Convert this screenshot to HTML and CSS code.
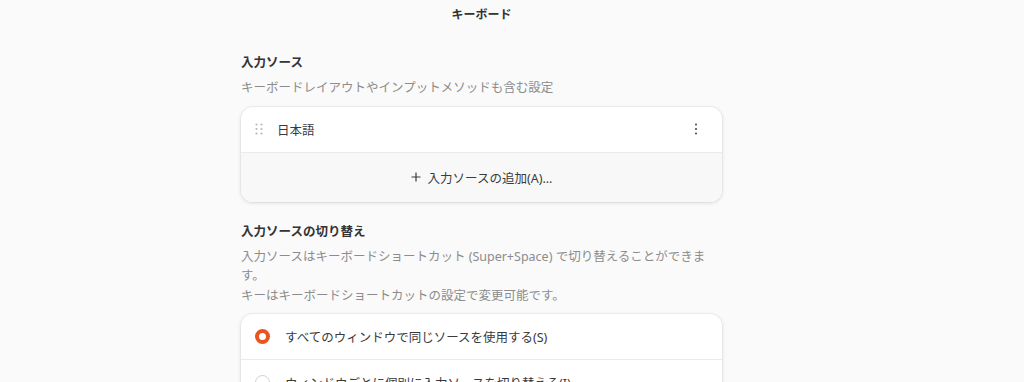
FILE: index.html
```html
<!DOCTYPE html>
<html lang="ja">
<head>
    <meta charset="UTF-8">
    <meta name="viewport" content="width=device-width, initial-scale=1.0">
    <title>キーボード</title>
    <link rel="stylesheet" href="styles.css">
</head>
<body>
    <div class="page">
        <header class="headerbar">
            <h1 class="title">キーボード</h1>
        </header>

        <main class="content">
            <section class="group">
                <h2 class="group-title">入力ソース</h2>
                <p class="group-desc">キーボードレイアウトやインプットメソッドも含む設定</p>
                <div class="card">
                    <div class="row">
                        <svg class="drag-handle" width="8" height="12" viewBox="0 0 8 12">
                            <circle cx="1.5" cy="1.5" r="1.1"/>
                            <circle cx="6.5" cy="1.5" r="1.1"/>
                            <circle cx="1.5" cy="6" r="1.1"/>
                            <circle cx="6.5" cy="6" r="1.1"/>
                            <circle cx="1.5" cy="10.5" r="1.1"/>
                            <circle cx="6.5" cy="10.5" r="1.1"/>
                        </svg>
                        <span class="row-label">日本語</span>
                        <svg class="menu-icon" width="4" height="12" viewBox="0 0 4 12">
                            <circle cx="2" cy="1.5" r="1"/>
                            <circle cx="2" cy="6" r="1"/>
                            <circle cx="2" cy="10.5" r="1"/>
                        </svg>
                    </div>
                    <div class="row add-row">
                        <svg class="plus-icon" width="10" height="10" viewBox="0 0 10 10">
                            <path d="M5 0.5 V9.5 M0.5 5 H9.5"/>
                        </svg>
                        <span>入力ソースの追加(A)...</span>
                    </div>
                </div>
            </section>

            <section class="group">
                <h2 class="group-title">入力ソースの切り替え</h2>
                <p class="group-desc">入力ソースはキーボードショートカット (Super+Space) で切り替えることができます。<br>キーはキーボードショートカットの設定で変更可能です。</p>
                <div class="card">
                    <div class="row radio-row">
                        <span class="radio checked"></span>
                        <span class="row-label">すべてのウィンドウで同じソースを使用する(S)</span>
                    </div>
                    <div class="row radio-row">
                        <span class="radio"></span>
                        <span class="row-label">ウィンドウごとに個別に入力ソースを切り替える(I)</span>
                    </div>
                </div>
            </section>
        </main>
    </div>
</body>
</html>
```

FILE: styles.css
```css
html, body {
    margin: 0;
    height: 100%;
    overflow: hidden;
}

body {
    font-family: "Noto Sans", "Noto Sans CJK JP", sans-serif;
    font-size: 12.5px;
    color: #3a3a3a;
    background-color: #fafafa;
}

.page {
    width: 963px;
}

.headerbar {
    height: 28px;
    display: flex;
    justify-content: center;
    align-items: center;
}

.title {
    margin: 0;
    font-size: 12px;
    font-weight: 700;
    color: #333333;
}

.content {
    width: 481px;
    margin: 0 auto;
    padding-top: 26px;
}

.group {
    margin-bottom: 21px;
}

.group-title {
    margin: 0;
    font-size: 12.5px;
    font-weight: 700;
    line-height: 18px;
    color: #333333;
}

.group-desc {
    margin: 6px 0 9px;
    line-height: 19.5px;
    color: #8c8c8c;
}

.card {
    background-color: #ffffff;
    border-radius: 12px;
    box-shadow: 0 0 0 1px rgba(0, 0, 0, 0.03), 0 1px 4px rgba(0, 0, 0, 0.12);
    overflow: hidden;
}

.row {
    height: 45px;
    display: flex;
    align-items: center;
    padding: 0 24px 0 14px;
    border-bottom: 1px solid #ebebeb;
}

.row:last-child {
    border-bottom: none;
}

.drag-handle {
    fill: #b8b8b8;
    margin-right: 14px;
}

.row-label {
    flex: 1;
    color: #3a3a3a;
}

.menu-icon {
    fill: #444444;
}

.add-row {
    height: 49px;
    justify-content: center;
    gap: 7px;
    padding: 0;
    background-color: #f8f8f8;
    color: #3a3a3a;
}

.plus-icon {
    stroke: #3a3a3a;
    stroke-width: 1.2;
    fill: none;
}

.radio-row {
    padding-left: 14px;
}

.radio {
    width: 15px;
    height: 15px;
    border-radius: 50%;
    border: 1.5px solid #d0d0d0;
    box-sizing: border-box;
    margin-right: 15px;
}

.radio.checked {
    border: 4.5px solid #e95420;
}
```
